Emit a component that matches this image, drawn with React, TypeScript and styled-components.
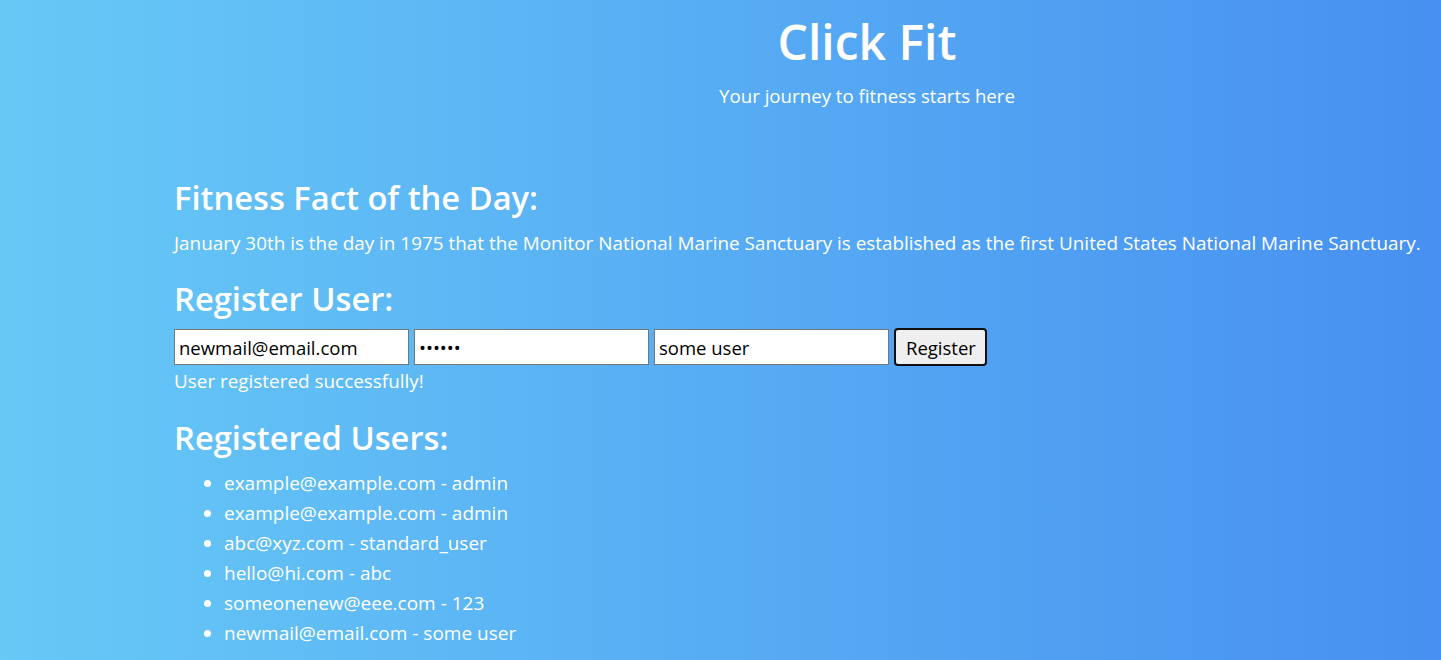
import React from "react";
import styled, { createGlobalStyle } from "styled-components";

const Global = createGlobalStyle`
  html, body { margin: 0; padding: 0; }
  body {
    min-height: 660px;
    overflow: hidden;
    background: linear-gradient(to right, #67c9f6, #4790f1);
    font-family: "Open Sans", "Noto Sans", sans-serif;
    color: #ffffff;
  }
`;

const Page = styled.div`
  padding-left: 174px;
  display: flex;
  flex-direction: column;
`;

const Header = styled.header`
  text-align: center;
  padding: 12px 0 70px 119px;
`;

const Title = styled.h1`
  margin: 0;
  font-size: 48px;
  font-weight: 600;
  line-height: 60px;
`;

const Tagline = styled.p`
  margin: 12px 0 0;
  font-size: 18.7px;
  line-height: 24px;
`;

const Section = styled.section`
  display: flex;
  flex-direction: column;
`;

const Heading = styled.h2`
  margin: 0 0 6px;
  font-size: 32.7px;
  font-weight: 600;
  line-height: 40px;
`;

const Text = styled.p`
  margin: 7px 0 24px;
  font-size: 18.9px;
  line-height: 24px;
  white-space: nowrap;
`;

const Form = styled.form`
  display: flex;
  align-items: center;
  gap: 5px;
  margin-top: 3px;
`;

const Field = styled.input`
  box-sizing: border-box;
  width: 235px;
  height: 36px;
  padding: 2px 4px;
  border: 1px solid #767676;
  background: #ffffff;
  font-family: inherit;
  font-size: 18.5px;
  color: #000;
  outline: none;
`;

const Button = styled.button`
  box-sizing: border-box;
  height: 38px;
  padding: 0 9px 0 10px;
  border: 2px solid #101010;
  border-radius: 4px;
  background: #efefef;
  font-family: inherit;
  font-size: 18.5px;
  color: #000;
`;

const Status = styled.p`
  margin: 3px 0 25px;
  font-size: 18.9px;
  line-height: 24px;
`;

const List = styled.ul`
  margin: 4px 0 0;
  padding-left: 50px;
  font-size: 19px;
  line-height: 30px;
`;

const users = [
  "example@example.com - admin",
  "example@example.com - admin",
  "abc@xyz.com - standard_user",
  "hello@hi.com - abc",
  "someonenew@eee.com - 123",
  "newmail@email.com - some user",
];

export default function App() {
  return (
    <>
      <Global />
      <Page>
        <Header>
          <Title>Click Fit</Title>
          <Tagline>Your journey to fitness starts here</Tagline>
        </Header>
        <Section>
          <Heading>Fitness Fact of the Day:</Heading>
          <Text>
            January 30th is the day in 1975 that the Monitor National Marine Sanctuary is established as the first United States National Marine Sanctuary.
          </Text>
        </Section>
        <Section>
          <Heading>Register User:</Heading>
          <Form onSubmit={(e) => e.preventDefault()}>
            <Field type="email" defaultValue="newmail@email.com" />
            <Field type="password" defaultValue="123456" />
            <Field type="text" defaultValue="some user" />
            <Button type="submit">Register</Button>
          </Form>
          <Status>User registered successfully!</Status>
        </Section>
        <Section>
          <Heading>Registered Users:</Heading>
          <List>
            {users.map((u, i) => (
              <li key={i}>{u}</li>
            ))}
          </List>
        </Section>
      </Page>
    </>
  );
}
